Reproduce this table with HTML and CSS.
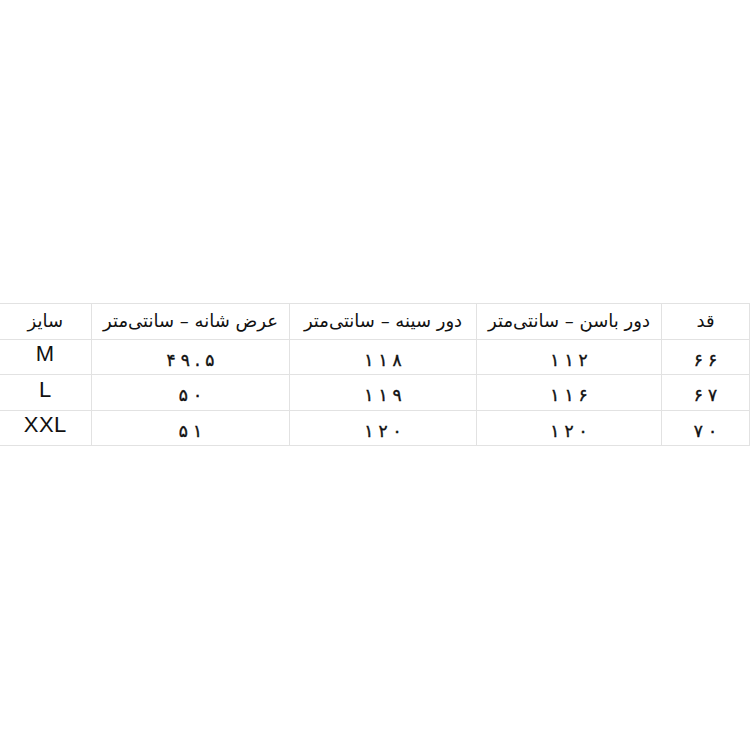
FILE: index.html
```html
<!DOCTYPE html>
<html lang="fa" dir="rtl">
<head>
<meta charset="utf-8">
<link rel="stylesheet" href="styles.css">
</head>
<body>
<div class="page">
<table class="sizes">
<colgroup>
<col class="c-qad"><col class="c-hip"><col class="c-chest"><col class="c-shoulder"><col class="c-size">
</colgroup>
<thead>
<tr><th>قد</th><th>دور باسن – سانتی‌متر</th><th>دور سینه – سانتی‌متر</th><th>عرض شانه – سانتی‌متر</th><th>سایز</th></tr>
</thead>
<tbody>
<tr><td class="num"><span>۶</span><span>۶</span></td><td class="num"><span>۱</span><span>۱</span><span>۲</span></td><td class="num"><span>۱</span><span>۱</span><span>۸</span></td><td class="num"><span>۴</span><span>۹</span><span>.</span><span>۵</span></td><td class="lat">M</td></tr>
<tr><td class="num"><span>۶</span><span>۷</span></td><td class="num"><span>۱</span><span>۱</span><span>۶</span></td><td class="num"><span>۱</span><span>۱</span><span>۹</span></td><td class="num"><span>۵</span><span>۰</span></td><td class="lat">L</td></tr>
<tr><td class="num"><span>۷</span><span>۰</span></td><td class="num"><span>۱</span><span>۲</span><span>۰</span></td><td class="num"><span>۱</span><span>۲</span><span>۰</span></td><td class="num"><span>۵</span><span>۱</span></td><td class="lat">XXL</td></tr>
</tbody>
</table>
</div>
</body>
</html>
```
FILE: styles.css
```css
html, body {
  margin: 0;
  padding: 0;
  background: #fff;
}
.page {
  width: 750px;
  height: 749px;
  padding-top: 303px;
  box-sizing: border-box;
}
.sizes {
  width: 750px;
  border-collapse: collapse;
  table-layout: fixed;
  font-family: "DejaVu Sans", "Noto Sans", sans-serif;
  color: #111;
}
.c-qad { width: 88px; }
.c-hip { width: 185px; }
.c-chest { width: 187px; }
.c-shoulder { width: 198px; }
.c-size { width: 92px; }
.sizes tr { height: 35.5px; }
.sizes th, .sizes td {
  border: 1px solid #e2e2e2;
  text-align: center;
  padding: 0;
  font-weight: normal;
  font-size: 18px;
  line-height: 22px;
}
.sizes tr > :last-child { border-left: none; }
.sizes .num {
  direction: ltr;
  font-size: 17px;
  padding-top: 6px;
}
.sizes .num span {
  display: inline-block;
  margin: 0 2.5px;
  -webkit-text-stroke: 0.4px #111;
}
.sizes .lat {
  font-family: "Liberation Sans", Arial, sans-serif;
  font-size: 22px;
  letter-spacing: 0.5px;
  padding-bottom: 5px;
}
```
